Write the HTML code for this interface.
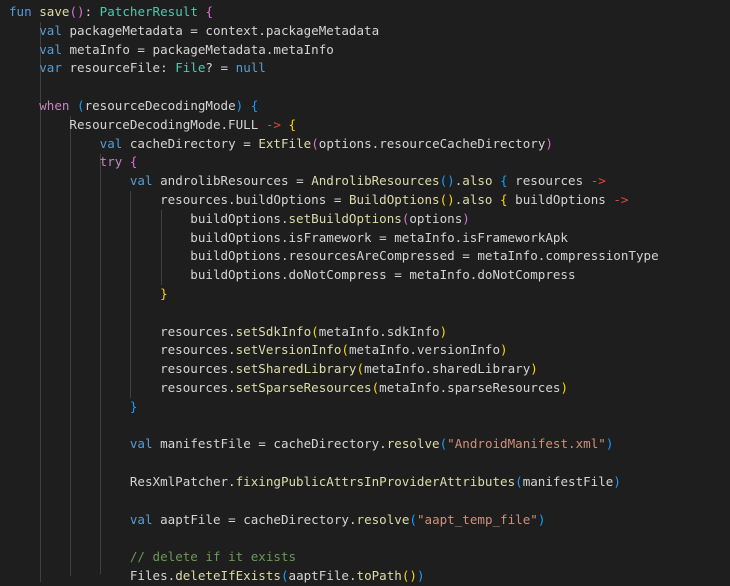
<!DOCTYPE html>
<html><head><meta charset="utf-8"><style>
html,body{margin:0;padding:0;background:#1e1e1e;width:730px;height:571px;overflow:hidden}
pre{position:absolute;left:9px;top:3px;margin:0;font-family:"DejaVu Sans Mono","Liberation Mono",monospace;font-size:12.55px;line-height:18.8px;color:#d4d4d4;white-space:pre}
.k{color:#569cd6}.c{color:#c586c0}.f{color:#dcdcaa}.t{color:#4ec9b0}.s{color:#ce9178}.m{color:#6a9955}
.a{color:#e0463c}.g{color:#ffd700}.p{color:#da70d6}.b{color:#179fff}
.gd{position:absolute;width:1px;background:#404040}
</style></head><body>
<div class="gd" style="left:40px;top:22px;height:560px"></div>
<div class="gd" style="left:70px;top:116px;height:460px"></div>
<div class="gd" style="left:100px;top:154px;height:420px"></div>
<div class="gd" style="left:130px;top:191px;height:207px"></div>
<div class="gd" style="left:161px;top:210px;height:75px"></div>
<pre><span class="k">fun</span> <span class="f">save</span><span class="p">()</span>: <span class="t">PatcherResult</span> <span class="p">{</span>
    <span class="k">val</span> packageMetadata = context.packageMetadata
    <span class="k">val</span> metaInfo = packageMetadata.metaInfo
    <span class="k">var</span> resourceFile: <span class="t">File</span>? = <span class="k">null</span>

    <span class="c">when</span> <span class="b">(</span>resourceDecodingMode<span class="b">)</span> <span class="b">{</span>
        ResourceDecodingMode.FULL <span class="a">-&gt;</span> <span class="g">{</span>
            <span class="k">val</span> cacheDirectory = <span class="f">ExtFile</span><span class="p">(</span>options.resourceCacheDirectory<span class="p">)</span>
            <span class="c">try</span> <span class="p">{</span>
                <span class="k">val</span> androlibResources = <span class="f">AndrolibResources</span><span class="b">()</span>.<span class="f">also</span> <span class="b">{</span> resources <span class="a">-&gt;</span>
                    resources.buildOptions = <span class="f">BuildOptions</span><span class="g">()</span>.<span class="f">also</span> <span class="g">{</span> buildOptions <span class="a">-&gt;</span>
                        buildOptions.<span class="f">setBuildOptions</span><span class="p">(</span>options<span class="p">)</span>
                        buildOptions.isFramework = metaInfo.isFrameworkApk
                        buildOptions.resourcesAreCompressed = metaInfo.compressionType
                        buildOptions.doNotCompress = metaInfo.doNotCompress
                    <span class="g">}</span>

                    resources.<span class="f">setSdkInfo</span><span class="g">(</span>metaInfo.sdkInfo<span class="g">)</span>
                    resources.<span class="f">setVersionInfo</span><span class="g">(</span>metaInfo.versionInfo<span class="g">)</span>
                    resources.<span class="f">setSharedLibrary</span><span class="g">(</span>metaInfo.sharedLibrary<span class="g">)</span>
                    resources.<span class="f">setSparseResources</span><span class="g">(</span>metaInfo.sparseResources<span class="g">)</span>
                <span class="b">}</span>

                <span class="k">val</span> manifestFile = cacheDirectory.<span class="f">resolve</span><span class="b">(</span><span class="s">"AndroidManifest.xml"</span><span class="b">)</span>

                ResXmlPatcher.<span class="f">fixingPublicAttrsInProviderAttributes</span><span class="b">(</span>manifestFile<span class="b">)</span>

                <span class="k">val</span> aaptFile = cacheDirectory.<span class="f">resolve</span><span class="b">(</span><span class="s">"aapt_temp_file"</span><span class="b">)</span>

                <span class="m">// delete if it exists</span>
                Files.<span class="f">deleteIfExists</span><span class="b">(</span>aaptFile.<span class="f">toPath</span><span class="g">()</span><span class="b">)</span>
</pre>
</body></html>
